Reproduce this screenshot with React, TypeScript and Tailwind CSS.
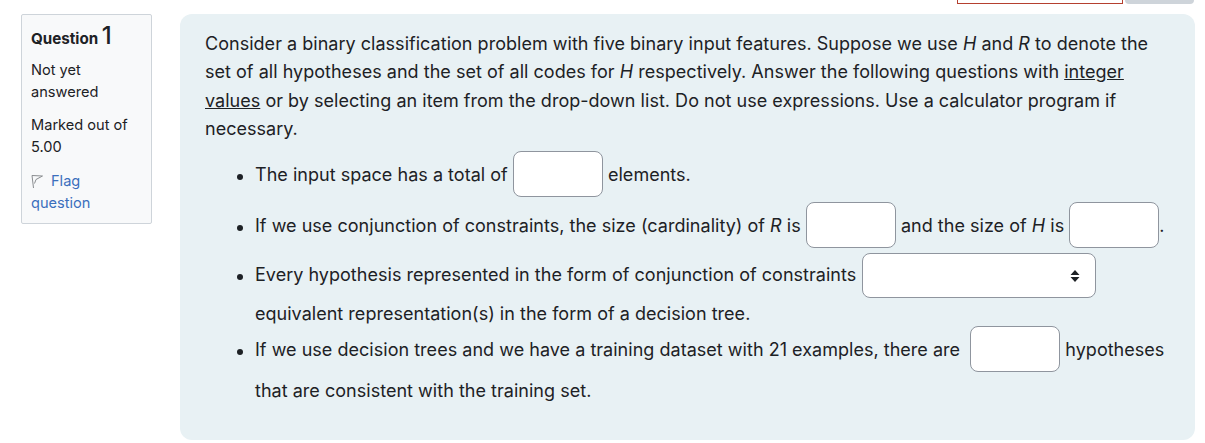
function Flag() {
  return (
    <svg width="13" height="15" viewBox="0 0 13 15" fill="none" className="inline-block mr-[7px] align-[-3px]">
      <path d="M2.5 14 L1 1.5 L11.5 2 L5 5.5 L3.5 9.5" stroke="#8a8d90" strokeWidth="1" fill="none" />
    </svg>
  );
}

function Blank({ wide = false }: { wide?: boolean }) {
  return (
    <input
      type="text"
      className={`inline-block w-[90px] h-[46px] mb-[5px] align-middle bg-white border border-[#8f959e] rounded-lg ${wide ? "ml-[5px]" : "ml-0"}`}
    />
  );
}

function App() {
  return (
    <div className="w-[1205px] h-[443px] overflow-hidden bg-white text-[#1d2125] font-['Inter',sans-serif]">
      <div className="h-[14px] flex justify-end items-start pr-[11px] gap-[2px]">
        <div className="w-[166px] h-[4px] border-x border-b border-[#b5402f]" />
        <div className="w-[69px] h-[4px] bg-[#ced4da] rounded-b-xl" />
      </div>
      <div className="flex items-start pl-[21px] pr-[10px] gap-[28px]">
        <aside className="w-[131px] h-[210px] shrink-0 bg-[#f8f9fa] border border-[#ced4da] rounded-[2px] px-[9px] pt-[7px] text-[14.6px] leading-[22px]">
          <h3 className="font-bold text-[15.2px] leading-[28px] h-[28px]">
            Question <span className="text-[24px] font-medium">1</span>
          </h3>
          <p className="mt-[9px]">Not yet answered</p>
          <p className="mt-[11px]">Marked out of 5.00</p>
          <p className="mt-[12px] text-[#3b6fbd]">
            <Flag />
            Flag
            <br />
            question
          </p>
        </aside>
        <main className="flex-1 h-[426px] bg-[#e8f1f4] rounded-xl pl-[25px] pr-[20px] pt-[16px] text-[18px] leading-[28.3px] tracking-[0.025px]">
          <p>
            Consider a binary classification problem with five binary input features. Suppose we use <i>H</i> and <i>R</i> to denote the set of all hypotheses and the set of all codes for <i>H</i> respectively. Answer the following questions with <u>integer values</u> or by selecting an item from the drop-down list. Do not use expressions. Use a calculator program if necessary.
          </p>
          <ul className="list-disc pl-[50px] mt-[8px]">
            <li>
              The input space has a total of <Blank /> elements.
            </li>
            <li>
              If we use conjunction of constraints, the size (cardinality) of <i>R</i> is <Blank /> and the size of <i>H</i> is <Blank />.
            </li>
            <li>
              Every hypothesis represented in the form of conjunction of constraints{" "}
              <span className="inline-flex align-middle items-center justify-end w-[234px] h-[45px] ml-[1px] mb-[2px] pr-[15px] bg-white border border-[#8f959e] rounded-lg">
                <svg width="10" height="14" viewBox="0 0 10 14" fill="#1d2125">
                  <path d="M5 1 L9.5 6 L0.5 6 Z M5 13 L0.5 8 L9.5 8 Z" />
                </svg>
              </span>{" "}
              equivalent representation(s) in the form of a decision tree.
            </li>
            <li className="-mt-[2px]">
              If we use decision trees and we have a training dataset with 21 examples, there are <Blank wide /> hypotheses that are consistent with the training set.
            </li>
          </ul>
        </main>
      </div>
    </div>
  );
}

export default App;
